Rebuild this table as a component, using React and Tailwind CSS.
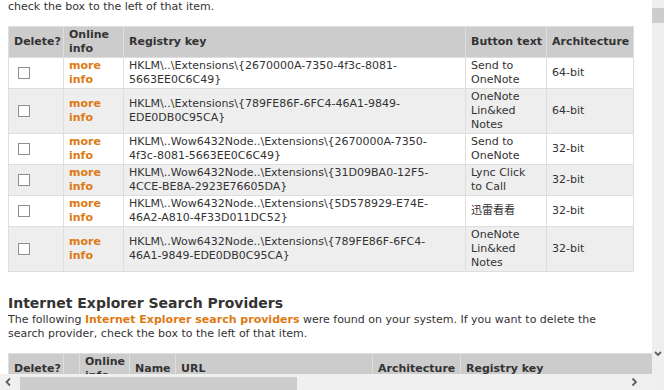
const toolbars = [
  { key: ['HKLM\\..\\Extensions\\{2670000A-7350-4f3c-8081-', '5663EE0C6C49}'], button: ['Send to', 'OneNote'], arch: '64-bit' },
  { key: ['HKLM\\..\\Extensions\\{789FE86F-6FC4-46A1-9849-', 'EDE0DB0C95CA}'], button: ['OneNote', 'Lin&ked', 'Notes'], arch: '64-bit' },
  { key: ['HKLM\\..Wow6432Node..\\Extensions\\{2670000A-7350-', '4f3c-8081-5663EE0C6C49}'], button: ['Send to', 'OneNote'], arch: '32-bit' },
  { key: ['HKLM\\..Wow6432Node..\\Extensions\\{31D09BA0-12F5-', '4CCE-BE8A-2923E76605DA}'], button: ['Lync Click', 'to Call'], arch: '32-bit' },
  { key: ['HKLM\\..Wow6432Node..\\Extensions\\{5D578929-E74E-', '46A2-A810-4F33D011DC52}'], button: ['迅雷看看'], arch: '32-bit' },
  { key: ['HKLM\\..Wow6432Node..\\Extensions\\{789FE86F-6FC4-', '46A1-9849-EDE0DB0C95CA}'], button: ['OneNote', 'Lin&ked', 'Notes'], arch: '32-bit' },
]

function Lines({ lines }) {
  return lines.map((l, i) => (
    <span key={i} className="block whitespace-nowrap">{l}</span>
  ))
}

function Checkbox() {
  return <span className="ml-[4px] block w-[12px] h-[12px] border border-[#8f8f8f] bg-white" />
}

const th = 'border border-[#dedede] px-[5px] py-px text-left align-middle font-bold whitespace-nowrap'
const td = 'border border-[#dedede] px-[5px] py-px align-middle whitespace-nowrap'

export default function App() {
  return (
    <div className="w-[670px] h-[390px] flex bg-white text-[#333] text-[11px] leading-[14px] font-['DejaVu_Sans','Noto_Sans_CJK_SC',sans-serif] overflow-hidden">
      <div className="w-[652px] flex flex-col">
        <div className="h-[374px] overflow-hidden px-2">
          <p>check the box to the left of that item.</p>

          {/* Browser toolbar buttons */}
          <table className="mt-[12px] w-[625px] table-fixed border-collapse">
            <colgroup>
              <col className="w-[55px]" />
              <col className="w-[60px]" />
              <col className="w-[342px]" />
              <col className="w-[81px]" />
              <col className="w-[87px]" />
            </colgroup>
            <thead>
              <tr className="bg-[#cccccc]">
                <th className={th}>Delete?</th>
                <th className={th}>Online<br />info</th>
                <th className={th}>Registry key</th>
                <th className={th}>Button text</th>
                <th className={th}>Architecture</th>
              </tr>
            </thead>
            <tbody>
              {toolbars.map((row, i) => (
                <tr key={i} className={i % 2 ? 'bg-[#eeeeee]' : 'bg-white'}>
                  <td className={td}><Checkbox /></td>
                  <td className={`${td} font-bold text-[#dd7a14]`}>more<br />info</td>
                  <td className={td}><Lines lines={row.key} /></td>
                  <td className={td}><Lines lines={row.button} /></td>
                  <td className={td}>{row.arch}</td>
                </tr>
              ))}
            </tbody>
          </table>

          <h2 className="mt-[21px] text-[14px] leading-[20px] font-bold text-[#333]">
            Internet Explorer Search Providers
          </h2>
          <p className="whitespace-nowrap">
            The following <span className="font-bold text-[#dd7a14]">Internet Explorer search providers</span> were found on your system. If you want to delete the
            <br />
            search provider, check the box to the left of that item.
          </p>

          <table className="mt-[12px] w-[700px] table-fixed border-collapse">
            <colgroup>
              <col className="w-[55px]" />
              <col className="w-[16px]" />
              <col className="w-[50px]" />
              <col className="w-[46px]" />
              <col className="w-[197px]" />
              <col className="w-[88px]" />
              <col className="w-[248px]" />
            </colgroup>
            <thead>
              <tr className="bg-[#cccccc]">
                <th className={th}>Delete?</th>
                <th className={th}></th>
                <th className={th}>Online<br />info</th>
                <th className={th}>Name</th>
                <th className={th}>URL</th>
                <th className={th}>Architecture</th>
                <th className={th}>Registry key</th>
              </tr>
            </thead>
          </table>
        </div>

        {/* horizontal scrollbar */}
        <div className="h-4 flex items-center bg-[#f0f0f0]">
          <svg width="20" height="16" viewBox="0 0 20 16" className="shrink-0">
            <path d="M10 4.5 L6.5 8 L10 11.5" fill="none" stroke="#606060" strokeWidth="1.8" />
          </svg>
          <div className="h-[13px] mt-[3px] w-[277px] bg-[#cdcdcd]" />
          <div className="flex-1" />
          <svg width="20" height="16" viewBox="0 0 20 16" className="shrink-0 mr-[10px]">
            <path d="M10.5 4.5 L14 8 L10.5 11.5" fill="none" stroke="#606060" strokeWidth="1.8" />
          </svg>
        </div>
      </div>

      {/* vertical scrollbar */}
      <div className="w-3 h-full flex flex-col bg-[#efefef]">
        <div className="mt-[8px] h-[15px] bg-[#cdcdcd]" />
        <div className="flex-1" />
        <svg width="12" height="12" viewBox="0 0 12 12" className="mb-[30px]">
          <path d="M3 4 L6 7 L9 4" fill="none" stroke="#606060" strokeWidth="1.8" />
        </svg>
      </div>
    </div>
  )
}
